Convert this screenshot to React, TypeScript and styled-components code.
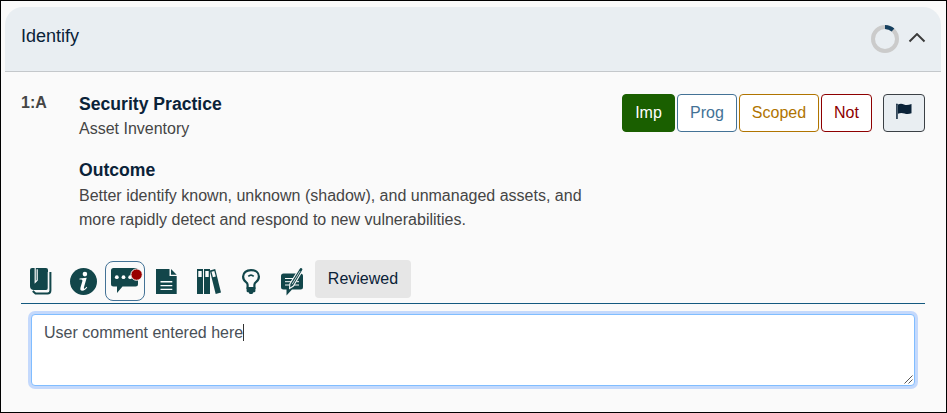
import React from "react";
import styled, { createGlobalStyle } from "styled-components";

const GlobalStyle = createGlobalStyle`
  *, *::before, *::after { box-sizing: border-box; }
  body { margin: 0; background: #fafafa; }
`;

const Page = styled.div`
  width: 947px;
  height: 413px;
  border: 1px solid #000;
  background: #fafafa;
  padding: 6px 5px 0 4px;
  overflow: hidden;
  font-family: "Liberation Sans", Arial, sans-serif;
  font-size: 16px;
  line-height: 24px;
  color: #454545;
`;

const Header = styled.header`
  display: flex;
  justify-content: space-between;
  align-items: center;
  height: 65px;
  padding: 0 15px 0 16px;
  background: #e9eef2;
  border-bottom: 1px solid #c4c8cb;
  border-radius: 18px 18px 0 0;
`;

const HeaderTitle = styled.div`
  font-size: 18px;
  line-height: 24px;
  color: #0a2238;
  margin-bottom: 7px;
`;

const HeaderTools = styled.div`
  display: flex;
  align-items: center;
  gap: 9px;
  svg { display: block; }
`;

const Body = styled.main`
  padding: 19px 16px 0 16px;
`;

const Question = styled.section`
  display: flex;
  align-items: flex-start;
  height: 169px;
`;

const Code = styled.div`
  flex: none;
  width: 58px;
  font-weight: 700;
`;

const Details = styled.div`
  flex: none;
  width: 543px;
`;

const Heading = styled.h2`
  margin: 0;
  padding-top: 2px;
  font-size: 17.6px;
  line-height: 22px;
  font-weight: 700;
  color: #0a2238;
`;

const Text = styled.p<{ $top: number; $bottom?: number }>`
  margin: 0 0 ${(p) => p.$bottom ?? 0}px;
  padding-top: ${(p) => p.$top}px;
`;

const Answers = styled.div`
  display: flex;
  flex: none;
  gap: 2px;
  margin-top: 3px;
`;

const Button = styled.button<{ $tone: string; $width: number; $filled?: boolean }>`
  width: ${(p) => p.$width}px;
  height: 38px;
  padding: 0;
  border: 1px solid ${(p) => p.$tone};
  border-radius: 4px;
  background: ${(p) => (p.$filled ? p.$tone : "#fff")};
  color: ${(p) => (p.$filled ? "#fff" : p.$tone)};
  font: inherit;
`;

const FlagButton = styled(Button)`
  margin-left: 9px;
  padding: 0 0 3px 12px;
  background: #e9eef2;
  svg { display: block; }
`;

const Toolbar = styled.div`
  display: flex;
  align-items: flex-start;
  height: 44px;
  border-bottom: 1px solid #14597f;
`;

const IconCell = styled.div<{ $width: number; $active?: boolean }>`
  display: flex;
  flex: none;
  align-items: center;
  justify-content: center;
  width: ${(p) => p.$width}px;
  height: 40px;
  margin-top: 1px;
  border: ${(p) => (p.$active ? "1px solid #437296" : "0")};
  border-radius: 8px;
  color: #12464a;
  svg { display: block; overflow: visible; flex: none; }
`;

const Reviewed = styled.button`
  width: 96px;
  height: 38px;
  margin-left: 3px;
  padding: 0 0 1px;
  border: 0;
  border-radius: 4px;
  background: #e6e6e6;
  color: #0a2238;
  font: inherit;
`;

const Comment = styled.div`
  position: relative;
  height: 72px;
  margin: 10px 10px 0;
  padding: 6px 12px;
  border: 1px solid #80bdff;
  border-radius: 4px;
  background: #fff;
  box-shadow: 0 0 0 3px #c4d9fc;
  color: #495057;
  display: flex;
  align-items: flex-start;
`;

const Caret = styled.span`
  width: 1px;
  height: 17px;
  margin-top: 3px;
  background: #333;
`;

const Grip = styled.svg`
  position: absolute;
  right: 1px;
  bottom: 1px;
`;

const BookIcon = () => (
  <svg width="22" height="27" viewBox="0 0 22 27">
    <path d="M2 0H16Q18 0 18 2V20Q18 22 16 22H4Q0 22 0 18V2Q0 0 2 0Z" fill="currentColor" />
    <path d="M5.2 0V14.3L7.2 12.2V1.2" fill="none" stroke="#fafafa" strokeWidth="1.2" />
    <path d="M18 22V4M3 22.8H17" stroke="#fafafa" strokeWidth=".6" />
    <path d="M20.4 4V22.5Q20.4 25.4 17.5 25.4H5.5L2.8 23" fill="none" stroke="currentColor" strokeWidth="2" />
  </svg>
);

const InfoIcon = () => (
  <svg width="27" height="27" viewBox="0 0 27 27">
    <circle cx="13.5" cy="13.5" r="13.5" fill="currentColor" />
    <circle cx="14.9" cy="6.1" r="2.3" fill="#fff" />
    <path d="M9.6 10.5L16.7 9.8L13.9 19.6Q13.6 21 14.5 20.7Q15.5 20.3 16.4 18.8L17.2 19.3Q15.2 22.7 12.2 22.7Q9.7 22.7 10.5 19.5L12.4 12.9Q12.7 11.5 11.3 11.4H9.4Z" fill="#fff" />
  </svg>
);

const CommentIcon = () => (
  <svg width="38" height="38" viewBox="0 0 38 38">
    <path d="M7.5 6H29.5Q32 6 32 8.5V22Q32 24.5 29.5 24.5H16.5L11 31V24.5H7.5Q5 24.5 5 22V8.5Q5 6 7.5 6Z" fill="currentColor" />
    <circle cx="10.8" cy="15.2" r="1.9" fill="#fff" />
    <circle cx="17.5" cy="15.2" r="1.9" fill="#fff" />
    <circle cx="24.2" cy="15.2" r="1.9" fill="#fff" />
    <circle cx="30.6" cy="12.6" r="5.7" fill="#990000" stroke="#fafafa" strokeWidth="1" />
  </svg>
);

const DocumentIcon = () => (
  <svg width="21" height="25" viewBox="0 0 21 25">
    <path d="M0 0H13.5V7H20.7V25H0Z" fill="currentColor" />
    <path d="M15 0L20.7 5.7H15Z" fill="currentColor" />
    <path d="M4.5 12.8H16.3M4.5 16.6H16.3M4.5 20.4H16.3" stroke="#fff" strokeWidth="1.4" />
  </svg>
);

const BindersIcon = () => (
  <svg width="24" height="25" viewBox="0 0 24 25">
    <path d="M0 0H6V25H0ZM7 0H13V25H7Z" fill="currentColor" />
    <path d="M12.8 1.4L18.2 0L24 23.5L18.7 25Z" fill="currentColor" />
    <path d="M1.3 2H4.7V8H1.3ZM8.3 2H11.7V8H8.3ZM14.5 2.8L17.3 2L18.8 7.5L15.9 8.3Z" fill="#fafafa" />
  </svg>
);

const BulbIcon = () => (
  <svg width="18" height="25" viewBox="0 0 18 25">
    <path d="M5.6 19V15.7Q5.6 14.2 3.8 12.9Q1.1 11 1.1 7.6C1.1 3.6 4.4 1.1 9 1.1S16.9 3.6 16.9 7.6Q16.9 11 14.2 12.9Q12.4 14.2 12.4 15.7V19Z" fill="none" stroke="currentColor" strokeWidth="2.2" />
    <path d="M4.6 18.3H13.4V22Q13.4 23.3 12 23.3H11.5L10.3 25H7.7L6.5 23.3H6Q4.6 23.3 4.6 22Z" fill="currentColor" />
    <path d="M6.3 7.3Q9 4.8 11.7 7.3" fill="none" stroke="currentColor" strokeWidth="1.7" />
  </svg>
);

const CommentPencilIcon = () => (
  <svg width="22" height="29" viewBox="0 0 22 29">
    <path d="M2.5 6.5H19.5Q22 6.5 22 9V20Q22 22.5 19.5 22.5H11L5.5 28.5V22.5H2.5Q0 22.5 0 20V9Q0 6.5 2.5 6.5Z" fill="currentColor" />
    <path d="M4 11.5H12M4 14.7H10M4 18H18M15.5 14.7H18" stroke="#fafafa" strokeWidth="1" />
    <path d="M18.5 1.2Q19.4 -.2 21 .8Q22.6 1.8 21.7 3.2L12.4 19L8.6 21.5L8.8 16.9Z" fill="currentColor" stroke="#fafafa" strokeWidth="1.1" />
    <path d="M19 4.2L11.2 17.2" stroke="#fafafa" strokeWidth=".8" />
  </svg>
);

export default function App() {
  return (
    <>
      <GlobalStyle />
      <Page>
        <Header>
          <HeaderTitle>Identify</HeaderTitle>
          <HeaderTools>
            <svg width="28" height="28" viewBox="0 0 28 28">
              <circle cx="14" cy="14" r="12" fill="none" stroke="#cbcbcb" strokeWidth="4" />
              <path d="M14 2A12 12 0 0 1 22 5.1" fill="none" stroke="#153f5f" strokeWidth="4" />
            </svg>
            <svg width="18" height="12" viewBox="0 0 18 12">
              <path d="M1.5 8.5L9 1.1L16.5 8.5" fill="none" stroke="#3b3b3b" strokeWidth="2" />
            </svg>
          </HeaderTools>
        </Header>
        <Body>
          <Question>
            <Code>1:A</Code>
            <Details>
              <Heading>Security Practice</Heading>
              <Text $top={2} $bottom={16}>Asset Inventory</Text>
              <Heading>Outcome</Heading>
              <Text $top={3}>
                Better identify known, unknown (shadow), and unmanaged assets, and
                <br />
                more rapidly detect and respond to new vulnerabilities.
              </Text>
            </Details>
            <Answers>
              <Button $width={53} $tone="#1a5f00" $filled>Imp</Button>
              <Button $width={60} $tone="#437296">Prog</Button>
              <Button $width={80} $tone="#b07400">Scoped</Button>
              <Button $width={51} $tone="#8e0000">Not</Button>
              <FlagButton $width={42} $tone="#3b4045" aria-label="Flag">
                <svg width="16" height="17" viewBox="0 0 16 17">
                  <path d="M.2 1.2Q.2 .5 .9 .5T1.7 1.2V16H.2Z" fill="#0a2238" />
                  <path d="M2 1.5Q5 .2 8 1.5T15.5 1V10.2Q12 11.7 8.5 10.5T2 10.7Z" fill="#0a2238" />
                </svg>
              </FlagButton>
            </Answers>
          </Question>
          <Toolbar>
            <IconCell $width={40}><BookIcon /></IconCell>
            <IconCell $width={44}><InfoIcon /></IconCell>
            <IconCell $width={40} $active><CommentIcon /></IconCell>
            <IconCell $width={43}><DocumentIcon /></IconCell>
            <IconCell $width={42}><BindersIcon /></IconCell>
            <IconCell $width={41}><BulbIcon /></IconCell>
            <IconCell $width={41}><CommentPencilIcon /></IconCell>
            <Reviewed>Reviewed</Reviewed>
          </Toolbar>
          <Comment role="textbox" aria-multiline="true">
            <span>User comment entered here</span>
            <Caret />
            <Grip width="9" height="9" viewBox="0 0 9 9">
              <path d="M.5 8.5L8.5 .5M4.5 8.5L8.5 4.5" stroke="#555" strokeWidth="1" />
            </Grip>
          </Comment>
        </Body>
      </Page>
    </>
  );
}
